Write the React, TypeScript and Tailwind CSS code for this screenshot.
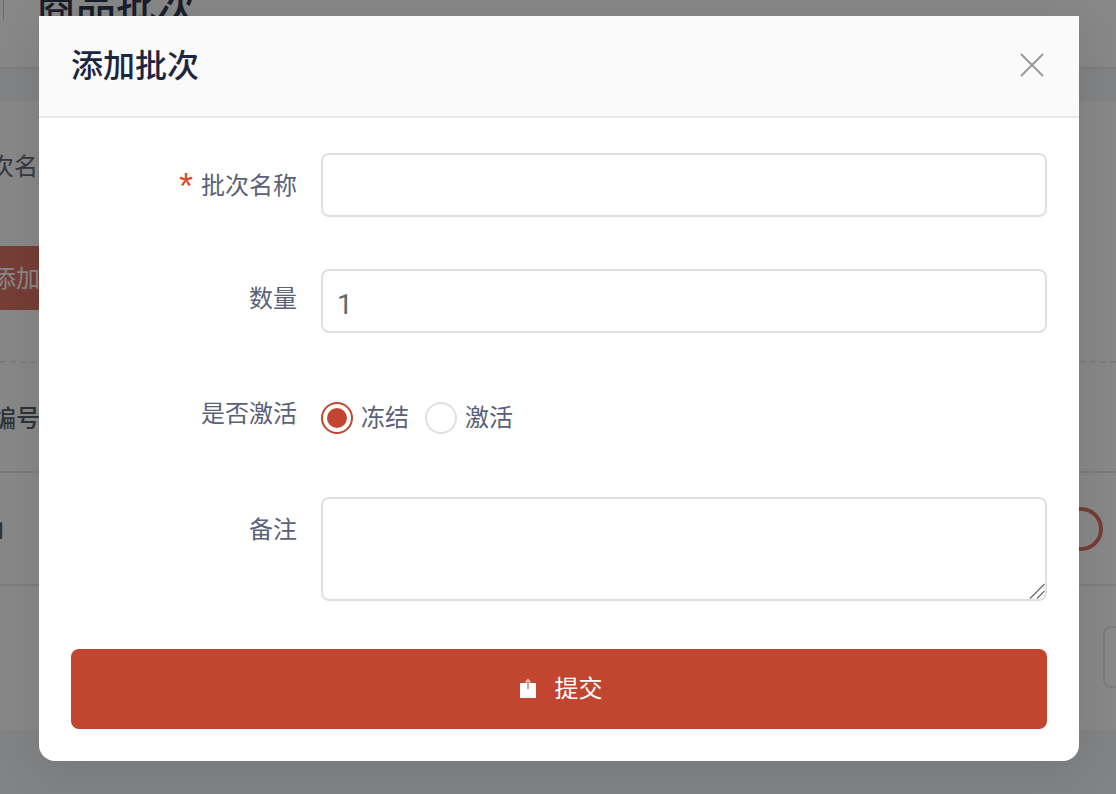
import { useState } from 'react';

const fontStack = "[font-family:'Liberation_Sans','Noto_Sans_CJK_SC',sans-serif]";

function BackgroundPage() {
  return (
    <div className="w-[1116px] h-[794px] overflow-hidden bg-[#f3f4f6] flex flex-col">
      {/* Page header */}
      <div className="h-[69px] shrink-0 bg-white border-b-2 border-[#e5e7eb] pl-[38px] relative">
        <span className="absolute left-[3px] top-0 w-[1px] h-[20px] bg-[#c8c8c8]" />
        <h1 className="text-[40px] leading-[48px] font-medium text-[#1f2a44] mt-[-18px] ml-[-2px]">商品批次</h1>
      </div>
      <div className="h-[32px] shrink-0" />
      {/* Card */}
      <div className="h-[629px] shrink-0 bg-white flex flex-col">
        <div className="h-[262px] shrink-0 border-b-2 border-dashed border-[#e5e7eb] flex flex-col pt-[48px]">
          <span className="text-[24px] leading-[36px] text-[#5b6070] ml-[-34px] whitespace-nowrap">批次名称</span>
          <div className="mt-[61px] w-[60px] h-[64px] bg-[#d86a5a] text-[24px] leading-[66px] text-white ml-[-20px] whitespace-nowrap">
            <span className="ml-[12px]">添加</span>
          </div>
        </div>
        <div className="h-[110px] shrink-0 border-b-2 border-[#e5e7eb] flex items-center">
          <span className="text-[24px] font-medium text-[#4b5563] ml-[-8px] mt-[4px]">编号</span>
        </div>
        <div className="h-[113px] shrink-0 border-b-2 border-[#e5e7eb] flex items-center justify-between">
          <span className="[font-family:Roboto,sans-serif] text-[24px] text-[#4b5563] ml-[-20px] mt-[4px]">11</span>
          <span className="w-[44px] h-[44px] rounded-full border-[4px] border-[#d86a5a] mr-[13px]" />
        </div>
        <div className="flex-1 flex items-center justify-end">
          <span className="w-[40px] h-[62px] rounded-[8px] border-2 border-[#e5e7eb] mr-[-27px] mt-[-2px]" />
        </div>
      </div>
    </div>
  );
}

export default function App() {
  const [active, setActive] = useState(false);

  return (
    <div className={`relative w-[1116px] h-[794px] overflow-hidden ${fontStack}`}>
      <BackgroundPage />

      {/* Overlay */}
      <div className="absolute inset-0 bg-[#111111]/50 flex justify-center items-start pt-[16px] pl-[2px]">
        <div className="w-[1040px] h-[745px] bg-white rounded-b-[16px] overflow-hidden shadow-[0_8px_50px_rgba(0,0,0,0.1)] flex flex-col">
          {/* Title */}
          <div className="h-[102px] shrink-0 bg-[#fafafa] border-b-2 border-[#e8e8e8] flex items-center justify-between pl-[32px] pr-[35px]">
            <h2 className="text-[32px] leading-[40px] font-medium text-[#1c2640]">添加批次</h2>
            <svg width="24" height="24" viewBox="0 0 24 24" fill="none" stroke="#9a9a9a" strokeWidth="2" strokeLinecap="round" className="mt-[-2px]">
              <path d="M1.5 1.5 L22.5 22.5 M22.5 1.5 L1.5 22.5" />
            </svg>
          </div>

          {/* Form */}
          <form className="flex flex-col px-[32px] pt-[35px]" onSubmit={(e) => e.preventDefault()}>
            <div className="flex mb-[52px]">
              <label className="w-[226px] shrink-0 h-[64px] flex items-center justify-end text-[24px] text-[#5a6178]">
                <span className="text-[36px] leading-[36px] h-[36px] text-[#e04a2a] mr-[8px] mt-[4px]">*</span>
                <span className="mt-[2px]">批次名称</span>
              </label>
              <input className="ml-[24px] w-[726px] h-[64px] rounded-[8px] border-2 border-[#dfe0e4] px-[15px] text-[24px] text-[#5f6368] outline-none" />
            </div>

            <div className="flex mb-[52px]">
              <label className="w-[226px] shrink-0 h-[64px] text-right text-[24px] leading-[60px] text-[#5a6178]">数量</label>
              <input defaultValue="1" className="[font-family:Roboto,sans-serif] ml-[24px] w-[726px] h-[64px] rounded-[8px] border-2 border-[#dfe0e4] px-[14px] pt-[6px] text-[28px] text-[#63676d] outline-none" />
            </div>

            <div className="flex mb-[48px] h-[64px]">
              <label className="w-[226px] shrink-0 h-[60px] text-right text-[24px] leading-[58px] text-[#5a6178]">是否激活</label>
              <div className="ml-[24px] flex items-center pt-[2px]">
                <button type="button" onClick={() => setActive(false)} className="flex items-center">
                  <span className={`w-[32px] h-[32px] rounded-full border-2 flex items-center justify-center ${active ? 'border-[#dfe0e4]' : 'border-[#c2452f]'}`}>
                    {!active && <span className="w-[20px] h-[20px] rounded-full bg-[#c2452f]" />}
                  </span>
                  <span className="ml-[8px] text-[24px] text-[#5a6178]">冻结</span>
                </button>
                <button type="button" onClick={() => setActive(true)} className="flex items-center ml-[16px]">
                  <span className={`w-[32px] h-[32px] rounded-full border-2 flex items-center justify-center ${active ? 'border-[#c2452f]' : 'border-[#dfe0e4]'}`}>
                    {active && <span className="w-[20px] h-[20px] rounded-full bg-[#c2452f]" />}
                  </span>
                  <span className="ml-[8px] text-[24px] text-[#5a6178]">激活</span>
                </button>
              </div>
            </div>

            <div className="flex mb-[48px]">
              <label className="w-[226px] shrink-0 text-right text-[24px] leading-[66px] text-[#5a6178]">备注</label>
              <div className="relative ml-[24px] w-[726px] h-[104px]">
                <textarea className="block w-full h-full resize-none rounded-[8px] border-2 border-[#dfe0e4] px-[16px] py-[8px] text-[24px] outline-none" />
                {/* resize grip */}
                <svg width="16" height="16" viewBox="0 0 16 16" fill="none" stroke="#6a6a6a" strokeWidth="1.2" className="absolute right-[2px] bottom-[2px]">
                  <path d="M1 15.5 L15.5 1 M8 15.5 L15.5 8" />
                </svg>
              </div>
            </div>

            <button type="submit" className="w-[976px] h-[80px] rounded-[8px] bg-[#c2452f] text-white text-[24px] flex items-center justify-center pl-[4px]">
              <svg width="16" height="20" viewBox="0 0 16 20" className="mr-[19px]">
                <path d="M0 4 H16 V19 H0 Z" fill="#ffffff" />
                <path d="M8 4 V0.5 M5.5 3 L8 0.5 L10.5 3" fill="none" stroke="#ffffff" strokeWidth="1" />
                <path d="M8 4 V10" fill="none" stroke="#c2452f" strokeWidth="1" />
                <path d="M5.5 4 H7 M9 4 H10.5" fill="none" stroke="#ffffff" strokeWidth="1" />
              </svg>
              提交
            </button>
          </form>
        </div>
      </div>
    </div>
  );
}
